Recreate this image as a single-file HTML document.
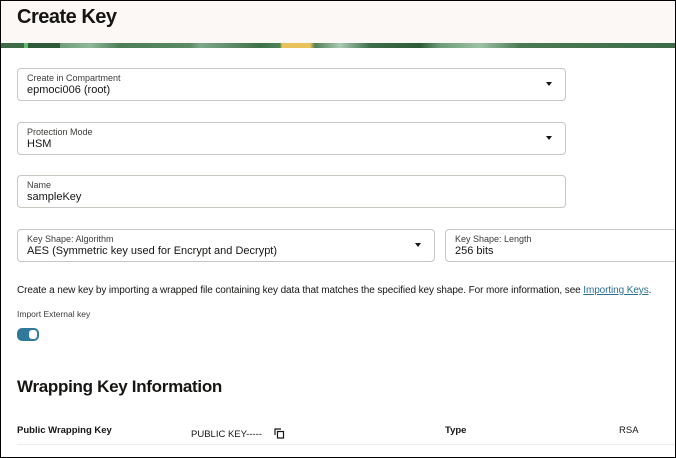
<!DOCTYPE html>
<html><head><style>
*{box-sizing:border-box;margin:0;padding:0}
body{width:676px;height:458px;overflow:hidden;background:#fff;font-family:"Liberation Sans",sans-serif;color:#161513;position:relative}
.frame{position:absolute;left:0;top:0;width:676px;height:458px;border:1px solid #000;pointer-events:none}
.hdr{position:absolute;left:0;top:0;width:676px;height:43px;background:#fcf8f6}
.hdr h1{position:absolute;left:17px;top:6px;font-size:20px;font-weight:bold;letter-spacing:-0.5px}
.band{position:absolute;left:0;top:43px;width:676px;height:5px;background:linear-gradient(90deg,#3d6b48 0,#3d6b48 24px,#5fc072 24px,#5fc072 28px,#2f5a3a 28px,#2f5a3a 60px,#6f9c78 60px,#8fb79a 90px,#4c7d55 120px,#5b8c63 190px,#7fa88a 200px,#3f7048 260px,#4e8358 280px,#e8c25a 282px,#e8c25a 310px,#507f57 315px,#a9cbb3 340px,#3f6e4a 370px,#2d5b36 420px,#6e9c78 440px,#9bc2a6 480px,#4a7a53 520px,#3d6b48 676px)}
.box{position:absolute;border:1px solid #c9c5c0;border-radius:4px;background:#fff}
.box .l{position:absolute;left:9px;top:4px;font-size:9px;color:#3d3b38}
.box .v{position:absolute;left:9px;top:15px;font-size:11px;color:#161513}
.box .c{position:absolute;right:13px;top:13px;width:0;height:0;border-left:3px solid transparent;border-right:3px solid transparent;border-top:4px solid #161513}
.t{position:absolute;font-size:10px}
</style></head><body>
<div class="hdr"><h1>Create Key</h1></div>
<div class="band"></div>
<div class="box" style="left:17px;top:68px;width:549px;height:33px"><div class="l">Create in Compartment</div><div class="v">epmoci006 (root)</div><div class="c"></div></div>
<div class="box" style="left:17px;top:122px;width:549px;height:33px"><div class="l">Protection Mode</div><div class="v">HSM</div><div class="c"></div></div>
<div class="box" style="left:17px;top:175px;width:549px;height:33px"><div class="l">Name</div><div class="v">sampleKey</div></div>
<div class="box" style="left:17px;top:229px;width:418px;height:33px"><div class="l">Key Shape: Algorithm</div><div class="v">AES (Symmetric key used for Encrypt and Decrypt)</div><div class="c"></div></div>
<div class="box" style="left:445px;top:229px;width:240px;height:33px"><div class="l">Key Shape: Length</div><div class="v">256 bits</div></div>
<div class="t" style="left:17px;top:285px;font-size:10px;letter-spacing:-0.1px;white-space:nowrap">Create a new key by importing a wrapped file containing key data that matches the specified key shape. For more information, see <span style="color:#2a6f8f;text-decoration:underline">Importing Keys</span>.</div>
<div class="t" style="left:17px;top:309px;font-size:8.5px;color:#3d3b38">Import External key</div>
<div style="position:absolute;left:17px;top:328px;width:22px;height:13px;border-radius:5px;background:#2f7a9a"><div style="position:absolute;right:2px;top:2px;width:8px;height:9px;border-radius:3px;background:#fff"></div></div>
<div style="position:absolute;left:17px;top:377px;font-size:17px;font-weight:bold;letter-spacing:-0.3px">Wrapping Key Information</div>
<div class="t" style="left:17px;top:425px;font-weight:bold;font-size:9.5px">Public Wrapping Key</div>
<div class="t" style="left:191px;top:429px;font-size:9.5px">PUBLIC KEY-----</div>
<svg style="position:absolute;left:274px;top:428px" width="11" height="11" viewBox="0 0 11 11"><path d="M1 7V1h6" fill="none" stroke="#161513" stroke-width="1.2"/><rect x="3.5" y="3.5" width="6" height="6.5" fill="none" stroke="#161513" stroke-width="1.2"/></svg>
<div class="t" style="left:445px;top:425px;font-weight:bold;font-size:9.5px">Type</div>
<div class="t" style="left:619px;top:425px;font-size:9.5px">RSA</div>
<div style="position:absolute;left:17px;top:444px;width:659px;height:1px;background:#eeece9"></div>
<div class="frame"></div>
</body></html>
